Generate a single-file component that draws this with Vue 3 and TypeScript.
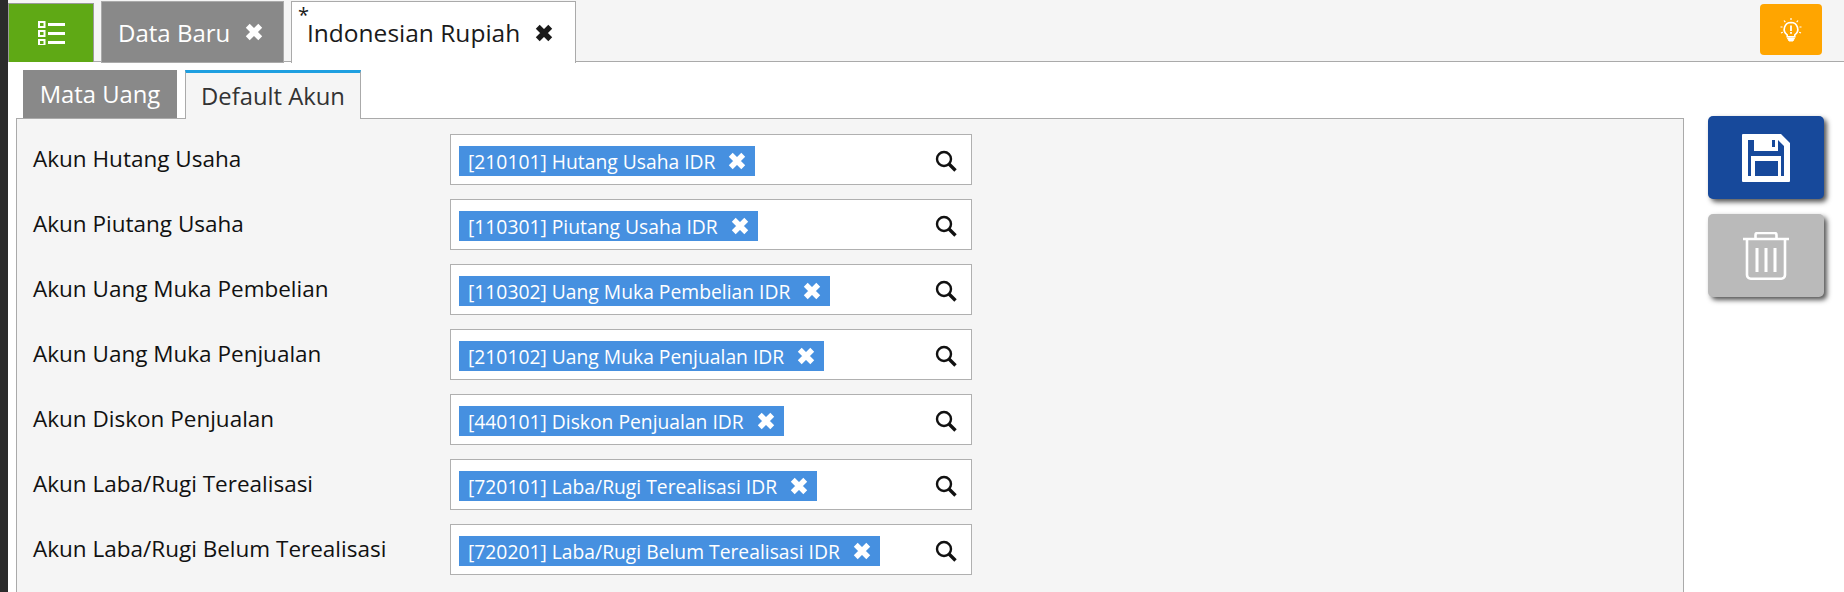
<script setup lang="ts">
const rows = [
  { label: 'Akun Hutang Usaha', value: '[210101] Hutang Usaha IDR' },
  { label: 'Akun Piutang Usaha', value: '[110301] Piutang Usaha IDR' },
  { label: 'Akun Uang Muka Pembelian', value: '[110302] Uang Muka Pembelian IDR' },
  { label: 'Akun Uang Muka Penjualan', value: '[210102] Uang Muka Penjualan IDR' },
  { label: 'Akun Diskon Penjualan', value: '[440101] Diskon Penjualan IDR' },
  { label: 'Akun Laba/Rugi Terealisasi', value: '[720101] Laba/Rugi Terealisasi IDR' },
  { label: 'Akun Laba/Rugi Belum Terealisasi', value: '[720201] Laba/Rugi Belum Terealisasi IDR' },
]
</script>

<template>
  <div class="page">
    <header class="topbar">
      <button class="menu-btn">
        <svg width="28" height="24" viewBox="0 0 28 24" fill="none" stroke="#fff">
          <rect x="1" y="1" width="5.500" height="5" stroke-width="2" />
          <rect x="1" y="10" width="5.500" height="5" stroke-width="2" />
          <rect x="1" y="19" width="5.500" height="5" stroke-width="2" />
          <path d="M10 3.500h17M10 12.500h17M10 21.500h17" stroke-width="3" />
        </svg>
      </button>
      <div class="tab inactive">
        <span>Data Baru</span>
        <svg class="x" viewBox="0 0 16 16"><path d="M3 3l10 10M13 3L3 13" stroke="currentColor" stroke-width="4.400" /></svg>
      </div>
      <div class="tab active">
        <sup class="star">*</sup>
        <span>Indonesian Rupiah</span>
        <svg class="x" viewBox="0 0 16 16"><path d="M3 3l10 10M13 3L3 13" stroke="currentColor" stroke-width="4.400" /></svg>
      </div>
      <button class="hint-btn">
        <svg width="22" height="26" viewBox="0 0 22 26" fill="none" stroke="#fff">
          <path d="M11 5.500a6.800 6.800 0 0 0-3.800 12.400v1.800h7.600v-1.800A6.800 6.800 0 0 0 11 5.500z" stroke-width="1.600" />
          <path d="M7.500 21h7l-1.500 3h-4z" fill="#fff" stroke-width="1" />
          <path d="M11 8.500v5.500M11 15v1.800" stroke-width="1.800" />
          <path d="M11 1v2M4 3.500l1.300 1.700M18 3.500l-1.300 1.700M0.500 10h2M19.500 10h2M1 16l1.800-.8M21 16l-1.800-.8" stroke-width="1.200" />
        </svg>
      </button>
    </header>

    <main class="content">
      <section class="left">
        <nav class="subtabs">
          <div class="subtab off">Mata Uang</div>
          <div class="subtab on">Default Akun</div>
        </nav>
        <div class="panel">
          <div v-for="r in rows" :key="r.label" class="row">
            <label class="label">{{ r.label }}</label>
            <div class="field">
              <span class="chip">
                <span>{{ r.value }}</span>
                <svg class="x chip-x" viewBox="0 0 16 16"><path d="M3 3l10 10M13 3L3 13" stroke="currentColor" stroke-width="4.400" /></svg>
              </span>
              <svg class="search" width="22" height="22" viewBox="0 0 22 22" fill="none" stroke="#111">
                <circle cx="9" cy="9" r="7" stroke-width="2.400" />
                <path d="M14 14l6.500 6.500" stroke-width="3.400" />
              </svg>
            </div>
          </div>
        </div>
      </section>

      <aside class="actions">
        <button class="action save">
          <svg width="48" height="48" viewBox="0 0 48 48">
            <path fill="#fff" fill-rule="evenodd" d="M1 0h38l9 9v38a1 1 0 0 1-1 1H1a1 1 0 0 1-1-1V1a1 1 0 0 1 1-1zM6 6v36h3V22h30v20h3V12l-6-6v11H12V6zM13 27v15h23V27zM30 6v7h3V6z" />
          </svg>
        </button>
        <button class="action trash">
          <svg width="46" height="48" viewBox="0 0 46 48" fill="none" stroke="#fff" stroke-width="2.600">
            <path d="M0 7h46" />
            <path d="M12.500 7V3a2 2 0 0 1 2-2h17a2 2 0 0 1 2 2v4" />
            <path d="M4 8v35a3.700 3.700 0 0 0 3.700 3.700h30.600A3.700 3.700 0 0 0 42 43V8" />
            <path d="M14 16v24M23 16v24M32 16v24" stroke-width="3" />
          </svg>
        </button>
      </aside>
    </main>
  </div>
</template>

<style>
html, body { margin: 0; background: #fff; overflow: hidden; }
</style>

<style scoped>
.page {
  width: 1844px;
  height: 592px;
  box-sizing: border-box;
  border-left: 8px solid #2b2b2b;
  font-family: "Open Sans", "Noto Sans", sans-serif;
  overflow: hidden;
  background: #fff;
}
button { border: 0; padding: 0; cursor: pointer; }
.topbar {
  height: 62px;
  box-sizing: border-box;
  background: #f5f5f5;
  border-bottom: 1px solid #aaa;
  display: flex;
  align-items: flex-start;
  padding-top: 1px;
}
.menu-btn {
  width: 86px;
  height: 59px;
  margin-top: 2px;
  padding-left: 2px;
  background: #5fa915;
  border: 1px solid #9a9a9a;
  border-bottom: 0;
  box-sizing: border-box;
  display: flex;
  align-items: center;
  justify-content: center;
}
.tab {
  height: 62px;
  box-sizing: border-box;
  margin-left: 7px;
  font-size: 24px;
  display: flex;
  align-items: center;
  position: relative;
  z-index: 1;
}
.tab.inactive {
  width: 183px;
  background: #898989;
  color: #fff;
  border: 1px solid #aaa;
  padding-left: 16px;
}
.tab.active {
  width: 285px;
  font-size: 24.500px;
  background: #fff;
  color: #1a1a1a;
  border: 1px solid #aaa;
  border-bottom: 0;
  padding-left: 15px;
}
.star {
  position: absolute;
  left: 6px;
  top: 3px;
  font-size: 20px;
  line-height: 20px;
}
.x { width: 20px; height: 20px; margin-left: 14px; flex: none; }
.hint-btn {
  margin-left: auto;
  margin-right: 22px;
  margin-top: 3px;
  width: 62px;
  height: 51px;
  border-radius: 4px;
  background: #ffa500;
  display: flex;
  align-items: center;
  justify-content: center;
}
.content { display: flex; align-items: flex-start; }
.left { width: 1668px; margin-left: 8px; flex: none; }
.subtabs { display: flex; height: 48px; padding: 8px 0 0 7px; gap: 8px; }
.subtab {
  height: 48px;
  box-sizing: border-box;
  font-size: 23.800px;
  display: flex;
  align-items: center;
  justify-content: center;
}
.subtab.off { width: 154px; background: #898989; color: #fff; }
.subtab.on {
  width: 176px;
  height: 49px;
  background: #f5f5f5;
  color: #333;
  border: 1px solid #aaa;
  border-top: 3px solid #1e9fe0;
  border-bottom: 0;
  position: relative;
  z-index: 1;
}
.panel {
  height: 480px;
  box-sizing: border-box;
  background: #f5f5f5;
  border: 1px solid #aaa;
  padding: 15px 0 0 16px;
  display: flex;
  flex-direction: column;
  gap: 14px;
}
.row { display: flex; align-items: center; height: 51px; }
.label { width: 417px; font-size: 22.500px; color: #111; flex: none; position: relative; top: -1px; }
.field {
  width: 522px;
  height: 51px;
  box-sizing: border-box;
  background: #fff;
  border: 1px solid #b0b0b0;
  display: flex;
  align-items: center;
  justify-content: space-between;
  padding: 3px 14px 0 8px;
}
.chip {
  height: 30px;
  background: #4690e0;
  color: #fff;
  font-size: 19.300px;
  display: flex;
  align-items: center;
  padding: 0 8px 0 9px;
}
.chip-x { margin-left: 12px; }
.actions { display: flex; flex-direction: column; gap: 15px; margin-left: 24px; margin-top: 54px; }
.action {
  width: 116px;
  height: 83px;
  border-radius: 5px;
  box-shadow: 3px 3px 5px #555;
  display: flex;
  align-items: center;
  justify-content: center;
}
.save { background: #17499b; }
.trash { background: #bababa; }
</style>
